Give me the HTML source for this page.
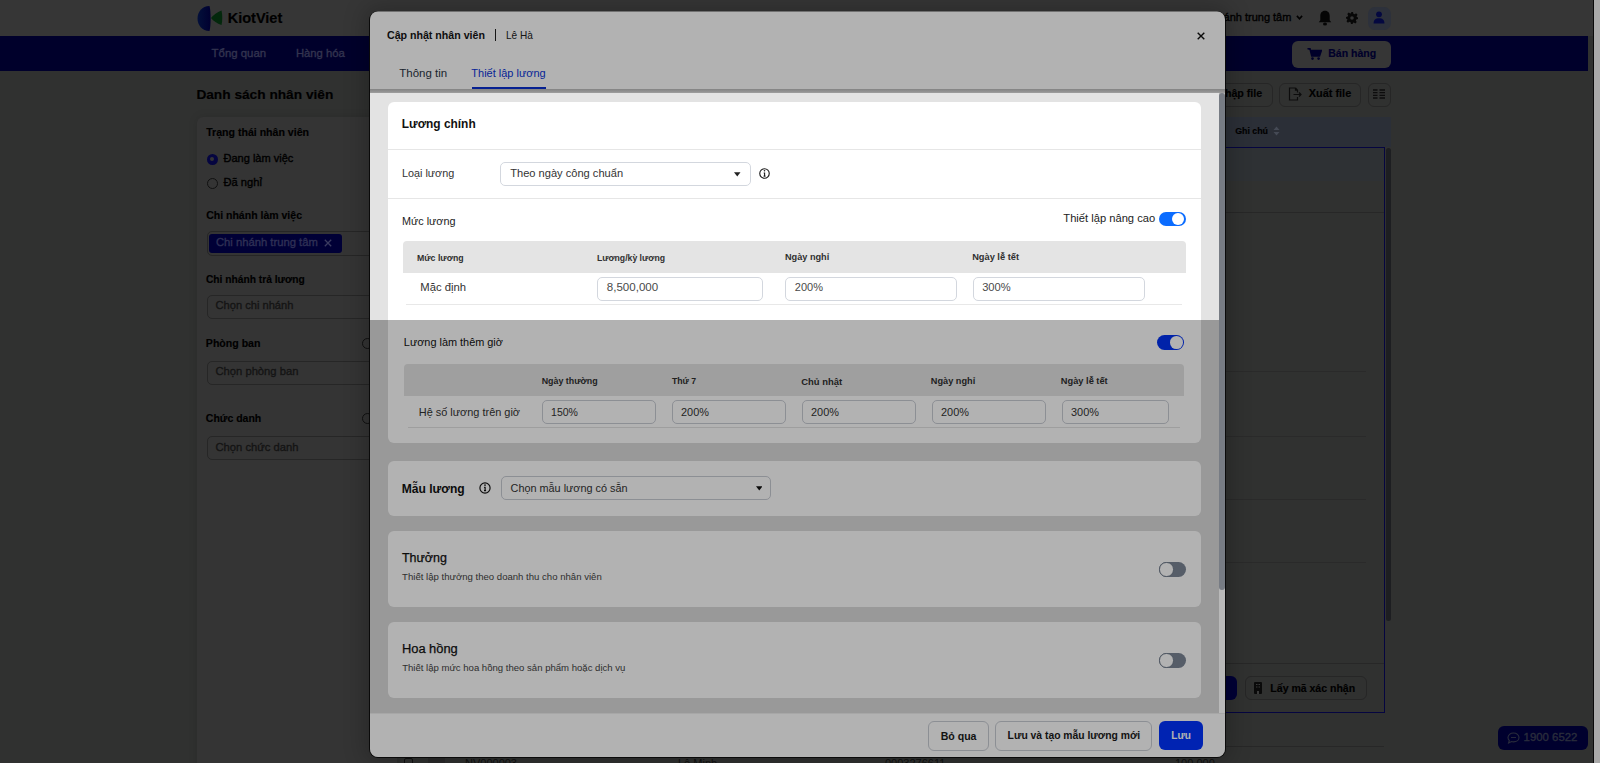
<!DOCTYPE html>
<html><head><meta charset="utf-8">
<style>
*{box-sizing:border-box;margin:0;padding:0}
html,body{width:1600px;height:763px;overflow:hidden}
body{background:#303130;font-family:"Liberation Sans",sans-serif;position:relative;color:#111}
.t{position:absolute;white-space:nowrap;line-height:1}
.b{position:absolute}
#modal{position:absolute;left:0;top:0;width:1600px;height:763px;clip-path:inset(11.5px 375px 6px 370px round 8px)}
</style></head>
<body>
<!-- ============ PAGE BACKGROUND ============ -->
<div class="b" style="left:0;top:0;width:1593px;height:36px;background:#363636"></div>
<div class="b" style="left:0;top:36px;width:1588px;height:35px;background:#00002b"></div>
<!-- logo -->
<svg class="b" style="left:196px;top:5px" width="28" height="27" viewBox="0 0 28 27">
  <defs><linearGradient id="lg1" x1="0" x2="1"><stop offset="0" stop-color="#03103a"/><stop offset="1" stop-color="#000030"/></linearGradient></defs>
  <path d="M13.5 1 C6 1 1.5 7 1.5 13.5 C1.5 20 6 26 13.5 26 C15 21 15 6 13.5 1 Z" fill="url(#lg1)"/>
  <path d="M25.5 5.5 C26.5 10 26.5 16 25.5 20 C21 18.5 17.5 16 15 13 C17.5 10 21 7 25.5 5.5 Z" fill="#03280c"/>
</svg>
<!-- top right icons -->
<svg class="b" style="left:1296px;top:15px" width="7" height="5" viewBox="0 0 7 5"><path d="M0.9 0.9 L3.5 3.7 L6.1 0.9" stroke="#000" stroke-width="1.6" fill="none"/></svg>
<svg class="b" style="left:1318px;top:10px" width="14" height="16" viewBox="0 0 14 16"><path d="M7 0.8 C3.8 0.8 2.3 3.3 2.3 6 L2.3 10.3 L0.8 12.3 L13.2 12.3 L11.7 10.3 L11.7 6 C11.7 3.3 10.2 0.8 7 0.8 Z" fill="#050505"/><ellipse cx="7" cy="14" rx="2" ry="1.6" fill="#050505"/></svg>
<svg class="b" style="left:1345.5px;top:12px" width="12" height="12" viewBox="0 0 12 12"><path d="M5 0h2l.4 1.7 1.2.5 1.5-.9 1.4 1.4-.9 1.5.5 1.2L12 5v2l-1.7.4-.5 1.2.9 1.5-1.4 1.4-1.5-.9-1.2.5L7 12H5l-.4-1.7-1.2-.5-1.5.9L.5 9.3l.9-1.5-.5-1.2L0 7V5l1.7-.4.5-1.2-.9-1.5L2.7.5l1.5.9 1.2-.5z" fill="#070707"/><circle cx="6" cy="6" r="1.8" fill="#353535"/></svg>
<div class="b" style="left:1368px;top:6.5px;width:22.5px;height:23px;background:#2d313b;border-radius:7px"></div>
<svg class="b" style="left:1373px;top:11px" width="12" height="13" viewBox="0 0 12 13"><circle cx="6" cy="3.3" r="2.9" fill="#040840"/><path d="M0.6 12.4 C0.6 8.6 2.8 7.3 6 7.3 C9.2 7.3 11.4 8.6 11.4 12.4 Z" fill="#040840"/></svg>
<!-- Ban hang button -->
<div class="b" style="left:1292px;top:41px;width:99px;height:26.5px;background:#363636;border-radius:6px"></div>
<svg class="b" style="left:1307px;top:48px" width="15" height="12" viewBox="0 0 15 12"><path d="M0.5 0.8 L3 0.8 L4.8 8 L12.5 8 L14.3 2.6 L3.8 2.6" stroke="#00002a" stroke-width="1.6" fill="#00002a"/><circle cx="5.5" cy="10.6" r="1.3" fill="#00002a"/><circle cx="11.6" cy="10.6" r="1.3" fill="#00002a"/></svg>
<!-- page scrollbar -->
<div class="b" style="left:1593px;top:0;width:1px;height:763px;background:#0a0a0a"></div>
<div class="b" style="left:1594px;top:0;width:6px;height:763px;background:#a9a9a9"></div>
<!-- left panel -->
<div class="b" style="left:197px;top:117px;width:200px;height:660px;background:#343434;border-radius:6px;box-shadow:0 0 10px rgba(0,0,0,.12)"></div>
<div class="b" style="left:206.5px;top:153.5px;width:11px;height:11px;border-radius:50%;background:#050540"></div>
<div class="b" style="left:210px;top:157px;width:4px;height:4px;border-radius:50%;background:#343434"></div>
<div class="b" style="left:206.5px;top:177.5px;width:11px;height:11px;border-radius:50%;border:1.2px solid #111"></div>
<div class="b" style="left:206.5px;top:231px;width:200px;height:25px;border:1px solid #262626;border-radius:5px"></div>
<div class="b" style="left:209px;top:234px;width:132.5px;height:18.5px;background:#000036;border-radius:3px"></div>
<svg class="b" style="left:324px;top:238.5px" width="8" height="8" viewBox="0 0 8 8"><path d="M0.8 0.8 L7.2 7.2 M7.2 0.8 L0.8 7.2" stroke="#3a3b60" stroke-width="1.3"/></svg>
<div class="b" style="left:206.5px;top:295px;width:200px;height:23.5px;border:1px solid #262626;border-radius:5px"></div>
<div class="b" style="left:206.5px;top:361px;width:200px;height:23.5px;border:1px solid #262626;border-radius:5px"></div>
<div class="b" style="left:206.5px;top:436px;width:200px;height:23.5px;border:1px solid #262626;border-radius:5px"></div>
<div class="b" style="left:362px;top:338px;width:11px;height:11px;border-radius:50%;border:1.3px solid #111"></div>
<div class="b" style="left:362px;top:413px;width:11px;height:11px;border-radius:50%;border:1.3px solid #111"></div>
<!-- right content -->
<div class="b" style="left:1200px;top:82.5px;width:72.5px;height:24px;border:1px solid #262626;border-radius:6px"></div>
<div class="b" style="left:1278.5px;top:82.5px;width:82px;height:24px;border:1px solid #262626;border-radius:6px"></div>
<svg class="b" style="left:1288px;top:87px" width="14" height="14" viewBox="0 0 14 14"><path d="M7.5 1 L1.5 1 L1.5 13 L9.5 13 L9.5 10 M7.5 1 L9.5 3.2 L9.5 5.5 M7.5 1 L7.5 3.2 L9.5 3.2 M5.5 7.5 L13 7.5 M11 5.5 L13 7.5 L11 9.5" stroke="#0c0c0c" stroke-width="1.2" fill="none"/></svg>
<div class="b" style="left:1367.5px;top:82.5px;width:23px;height:24px;border:1px solid #262626;border-radius:6px"></div>
<svg class="b" style="left:1373px;top:89px" width="12" height="10" viewBox="0 0 12 10"><path d="M0 1h4.5M6.5 1H12M0 3.7h4.5M6.5 3.7H12M0 6.3h4.5M6.5 6.3H12M0 9h4.5M6.5 9H12" stroke="#0c0c0c" stroke-width="1.3"/></svg>
<div class="b" style="left:1200px;top:116.7px;width:190.7px;height:30px;background:#2b2f37"></div>
<svg class="b" style="left:1273px;top:126px" width="7" height="10" viewBox="0 0 7 10"><path d="M3.5 0.5 L6.5 4 L0.5 4 Z M3.5 9.5 L6.5 6 L0.5 6 Z" fill="#454a55"/></svg>
<div class="b" style="left:1200px;top:147px;width:185px;height:566px;border:1px solid #050540;border-left:none"></div>
<div class="b" style="left:1200px;top:148px;width:184.4px;height:33px;background:#2e3134"></div>
<div class="b" style="left:1200px;top:212px;width:184px;height:1px;background:#272727"></div>
<div class="b" style="left:1200px;top:371px;width:166px;height:1px;background:#2a2a2a"></div>
<div class="b" style="left:1200px;top:435.5px;width:166px;height:1px;background:#2a2a2a"></div>
<div class="b" style="left:1200px;top:498.5px;width:166px;height:1px;background:#2a2a2a"></div>
<div class="b" style="left:1200px;top:561.5px;width:166px;height:1px;background:#2a2a2a"></div>
<div class="b" style="left:1200px;top:663px;width:184px;height:1px;background:#272727"></div>
<div class="b" style="left:1385.5px;top:148px;width:5.5px;height:473px;background:#1d1e21;border-radius:3px"></div>
<div class="b" style="left:1200px;top:676px;width:37px;height:24px;background:#000036;border-radius:6px"></div>
<div class="b" style="left:1244.5px;top:676px;width:122px;height:24px;border:1px solid #262626;border-radius:6px"></div>
<svg class="b" style="left:1254px;top:682px" width="8" height="12" viewBox="0 0 8 12"><rect x="0" y="0" width="8" height="12" rx="1" fill="#0a0a0a"/><path d="M2 2.5h1.5M4.5 2.5H6M2 5h1.5M4.5 5H6" stroke="#3a3a3a" stroke-width="1"/><rect x="3" y="9" width="2" height="3" fill="#3a3a3a"/></svg>
<div class="b" style="left:1200px;top:745.5px;width:184px;height:1px;background:#272727"></div>
<div class="b" style="left:1498px;top:725.5px;width:89.5px;height:24px;background:#00002e;border-radius:6px"></div>
<svg class="b" style="left:1506.5px;top:732px" width="13" height="12" viewBox="0 0 13 12"><path d="M6.5 1 C3.3 1 1 3 1 5.5 C1 6.7 1.5 7.8 2.3 8.5 L1.6 11 L4.5 9.6 C5.1 9.8 5.8 9.9 6.5 9.9 C9.7 9.9 12 7.9 12 5.5 C12 3 9.7 1 6.5 1 Z" stroke="#2a2d3c" stroke-width="1.1" fill="none"/><path d="M4 5.5 H9" stroke="#2a2d3c" stroke-width="0.9"/></svg>
<!-- bottom row under modal -->
<div class="b" style="left:404px;top:758px;width:9px;height:9px;border:1px solid #111;border-radius:2px"></div>
<div class="b" style="left:428px;top:758px;width:17px;height:9px;background:#2a2a2a"></div>
<div class="t" style="left:465px;top:758px;font-size:11px;color:#111">NV000003</div>
<div class="t" style="left:678px;top:758px;font-size:11px;color:#111">Lê Minh</div>
<div class="t" style="left:885px;top:758px;font-size:11px;color:#111">0003276611</div>
<div class="t" style="left:1175px;top:758px;font-size:11px;color:#111">100,000</div>
<!-- modal shadow line -->
<div class="b" style="left:368.8px;top:11px;width:857.4px;height:747px;border-radius:9px;background:#0a0a0a;box-shadow:0 0 22px 4px rgba(0,0,0,.22)"></div>
<div class="t" style="left:227.73px;top:10.73px;font-size:14.50px;color:#000;font-weight:bold;-webkit-text-stroke:0.15px #000">KiotViet</div>
<div class="t" style="left:1191.73px;top:12.29px;font-size:11.00px;color:#000;-webkit-text-stroke:0.35px #000">Chi nhánh trung tâm</div>
<div class="t" style="left:211.61px;top:47.93px;font-size:11.42px;color:#33344f;-webkit-text-stroke:0.35px #33344f">Tổng quan</div>
<div class="t" style="left:295.92px;top:48.06px;font-size:11.27px;color:#33344f;-webkit-text-stroke:0.35px #33344f">Hàng hóa</div>
<div class="t" style="left:1328.27px;top:48.10px;font-size:10.51px;color:#00002a;font-weight:bold;-webkit-text-stroke:0.15px #00002a">Bán hàng</div>
<div class="t" style="left:196.38px;top:87.91px;font-size:13.69px;color:#000;font-weight:bold;-webkit-text-stroke:0.15px #000">Danh sách nhân viên</div>
<div class="t" style="left:1217.20px;top:87.97px;font-size:10.67px;color:#000;font-weight:bold;-webkit-text-stroke:0.15px #000">Nhập file</div>
<div class="t" style="left:1308.85px;top:87.77px;font-size:10.90px;color:#000;font-weight:bold;-webkit-text-stroke:0.15px #000">Xuất file</div>
<div class="t" style="left:1235.17px;top:126.52px;font-size:8.84px;color:#000;font-weight:bold;-webkit-text-stroke:0.15px #000">Ghi chú</div>
<div class="t" style="left:206.17px;top:127.34px;font-size:10.58px;color:#000;font-weight:bold;-webkit-text-stroke:0.15px #000">Trạng thái nhân viên</div>
<div class="t" style="left:223.54px;top:152.76px;font-size:11.03px;color:#000;-webkit-text-stroke:0.35px #000">Đang làm việc</div>
<div class="t" style="left:223.53px;top:176.57px;font-size:11.14px;color:#000;-webkit-text-stroke:0.35px #000">Đã nghỉ</div>
<div class="t" style="left:206.17px;top:209.79px;font-size:10.52px;color:#000;font-weight:bold;-webkit-text-stroke:0.15px #000">Chi nhánh làm việc</div>
<div class="t" style="left:215.93px;top:236.88px;font-size:11.25px;color:#2f3055;-webkit-text-stroke:0.35px #2f3055">Chi nhánh trung tâm</div>
<div class="t" style="left:205.89px;top:274.73px;font-size:10.24px;color:#000;font-weight:bold;-webkit-text-stroke:0.15px #000">Chi nhánh trả lương</div>
<div class="t" style="left:215.53px;top:300.19px;font-size:11.12px;color:#141414;-webkit-text-stroke:0.35px #141414">Chọn chi nhánh</div>
<div class="t" style="left:205.87px;top:337.75px;font-size:10.57px;color:#000;font-weight:bold;-webkit-text-stroke:0.15px #000">Phòng ban</div>
<div class="t" style="left:215.53px;top:366.11px;font-size:11.21px;color:#141414;-webkit-text-stroke:0.35px #141414">Chọn phòng ban</div>
<div class="t" style="left:205.87px;top:413.52px;font-size:10.49px;color:#000;font-weight:bold;-webkit-text-stroke:0.15px #000">Chức danh</div>
<div class="t" style="left:215.53px;top:441.91px;font-size:11.21px;color:#141414;-webkit-text-stroke:0.35px #141414">Chọn chức danh</div>
<div class="t" style="left:1270.37px;top:683.08px;font-size:10.53px;color:#000;font-weight:bold;-webkit-text-stroke:0.15px #000">Lấy mã xác nhận</div>
<div class="t" style="left:1523.62px;top:731.65px;font-size:11.40px;color:#2a2d3c;-webkit-text-stroke:0.35px #2a2d3c">1900 6522</div>

<!-- ============ MODAL ============ -->
<div id="modal">
  <div class="b" style="left:370px;top:11px;width:855px;height:746px;background:#fff"></div>
  <!-- header -->
  <div class="b" style="left:495px;top:29px;width:1.3px;height:12px;background:#222"></div>
  <svg class="b" style="left:1196.5px;top:31.5px" width="8" height="8" viewBox="0 0 8 8"><path d="M0.7 0.7 L7.3 7.3 M7.3 0.7 L0.7 7.3" stroke="#111" stroke-width="1.4"/></svg>
  <div class="b" style="left:472px;top:87px;width:74px;height:2px;background:#0a2fd0"></div>
  <div class="b" style="left:370px;top:89px;width:855px;height:4px;background:linear-gradient(#bdbdbd,#cfcfcf 60%,#e6e6e6)"></div>
  <!-- body -->
  <div class="b" style="left:370px;top:93px;width:849px;height:227px;background:#e3e3e3"></div>
  <div class="b" style="left:370px;top:320px;width:849px;height:393px;background:#dcdcdc"></div>
  <!-- card 1 -->
  <div class="b" style="left:387.5px;top:102px;width:813.5px;height:341px;background:#fff;border-radius:6px"></div>
  <div class="b" style="left:387.5px;top:149px;width:813.5px;height:1px;background:#e6e6e6"></div>
  <div class="b" style="left:387.5px;top:198px;width:813.5px;height:1px;background:#e6e6e6"></div>
  <div class="b" style="left:500px;top:161.7px;width:250.7px;height:24px;border:1px solid #d3d7de;border-radius:5px"></div>
  <svg class="b" style="left:734.3px;top:171.6px" width="6.5" height="5" viewBox="0 0 6.5 5"><path d="M0 0.2 L6.5 0.2 L3.25 4.6 Z" fill="#222"/></svg>
  <svg class="b" style="left:759.2px;top:167.8px" width="11" height="11" viewBox="0 0 11 11"><circle cx="5.5" cy="5.5" r="4.75" stroke="#1a1a1a" stroke-width="1.1" fill="none"/><circle cx="5.5" cy="2.75" r=".8" fill="#1a1a1a"/><path d="M4.7 5 L5.6 5 L5.6 8 M4.6 8.1 L6.5 8.1" stroke="#1a1a1a" stroke-width="1.1" fill="none"/></svg>
  <!-- toggle on bright -->
  <div class="b" style="left:1159.2px;top:211.7px;width:26.8px;height:14.6px;background:#0b6cff;border-radius:8px"></div>
  <div class="b" style="left:1172.3px;top:213.2px;width:11.8px;height:11.8px;background:#fff;border-radius:50%"></div>
  <!-- table 1 -->
  <div class="b" style="left:402.6px;top:241px;width:783.2px;height:31.5px;background:#e4e4e4;border-radius:4px 4px 0 0"></div>
  <div class="b" style="left:597.4px;top:276.6px;width:165.6px;height:24px;border:1px solid #d3d7de;border-radius:5px"></div>
  <div class="b" style="left:785.2px;top:276.6px;width:172px;height:24px;border:1px solid #d3d7de;border-radius:5px"></div>
  <div class="b" style="left:972.5px;top:276.6px;width:172px;height:24px;border:1px solid #d3d7de;border-radius:5px"></div>
  <div class="b" style="left:406px;top:304px;width:776px;height:1px;background:#e8e8e8"></div>
  <!-- overtime -->
  <div class="b" style="left:1156.6px;top:335.3px;width:27.6px;height:14.8px;background:#0032f2;border-radius:8px"></div>
  <div class="b" style="left:1170.1px;top:336px;width:12.6px;height:12.6px;background:#fff;border-radius:50%"></div>
  <div class="b" style="left:404px;top:364.4px;width:779.7px;height:31.6px;background:#e4e4e4;border-radius:4px 4px 0 0"></div>
  <div class="b" style="left:541.8px;top:400.3px;width:114.7px;height:23.4px;border:1px solid #c9cdd5;border-radius:5px"></div>
  <div class="b" style="left:671.8px;top:400.3px;width:114.7px;height:23.4px;border:1px solid #c9cdd5;border-radius:5px"></div>
  <div class="b" style="left:801.8px;top:400.3px;width:114.7px;height:23.4px;border:1px solid #c9cdd5;border-radius:5px"></div>
  <div class="b" style="left:931.5px;top:400.3px;width:114.9px;height:23.4px;border:1px solid #c9cdd5;border-radius:5px"></div>
  <div class="b" style="left:1062px;top:400.3px;width:106.5px;height:23.4px;border:1px solid #c9cdd5;border-radius:5px"></div>
  <div class="b" style="left:408px;top:427px;width:772px;height:1px;background:#e2e2e2"></div>
  <!-- card 2 -->
  <div class="b" style="left:387.5px;top:461.2px;width:813.5px;height:54.5px;background:#fff;border-radius:6px"></div>
  <svg class="b" style="left:479.2px;top:481.8px" width="12" height="12" viewBox="0 0 12 12"><circle cx="6" cy="6" r="5.1" stroke="#111" stroke-width="1.15" fill="none"/><circle cx="6" cy="3.1" r=".85" fill="#111"/><path d="M5.1 5.4 L6.1 5.4 L6.1 8.6 M5 8.7 L7.1 8.7" stroke="#111" stroke-width="1.2" fill="none"/></svg>
  <div class="b" style="left:501.2px;top:476.2px;width:269.5px;height:24.3px;border:1px solid #c9cdd5;border-radius:5px"></div>
  <svg class="b" style="left:755.5px;top:485.5px" width="6.5" height="5" viewBox="0 0 6.5 5"><path d="M0 0.2 L6.5 0.2 L3.25 4.6 Z" fill="#111"/></svg>
  <!-- card 3 -->
  <div class="b" style="left:387.5px;top:531.4px;width:813.5px;height:75.5px;background:#fff;border-radius:6px"></div>
  <div class="b" style="left:1159px;top:562px;width:27px;height:15px;background:#7b8696;border-radius:8px"></div>
  <div class="b" style="left:1159.3px;top:562.3px;width:14.4px;height:14.4px;background:#fff;border:1px solid #6f7a8a;border-radius:50%"></div>
  <!-- card 4 -->
  <div class="b" style="left:387.5px;top:622.2px;width:813.5px;height:75.5px;background:#fff;border-radius:6px"></div>
  <div class="b" style="left:1159px;top:653px;width:27px;height:15px;background:#7b8696;border-radius:8px"></div>
  <div class="b" style="left:1159.3px;top:653.3px;width:14.4px;height:14.4px;background:#fff;border:1px solid #6f7a8a;border-radius:50%"></div>
  <!-- footer -->
  <div class="b" style="left:370px;top:713px;width:855px;height:1px;background:#f0f0f0"></div>
  <div class="b" style="left:928.1px;top:720.5px;width:60.7px;height:30px;border:1px solid #c9cdd5;border-radius:6px"></div>
  <div class="b" style="left:995.2px;top:720.5px;width:157.3px;height:30px;border:1px solid #c9cdd5;border-radius:6px"></div>
  <div class="b" style="left:1159.3px;top:720.8px;width:43.6px;height:29.7px;background:#0033ff;border-radius:6px"></div>
  <div class="t" style="left:386.96px;top:30.10px;font-size:10.64px;color:#141414;font-weight:bold">Cập nhật nhân viên</div>
<div class="t" style="left:505.90px;top:30.57px;font-size:10.08px;color:#222">Lê Hà</div>
<div class="t" style="left:399.31px;top:67.68px;font-size:11.49px;color:#2a3443">Thông tin</div>
<div class="t" style="left:471.34px;top:68.11px;font-size:10.97px;color:#0a34d8">Thiết lập lương</div>
<div class="t" style="left:401.79px;top:119.03px;font-size:11.90px;color:#111;font-weight:bold">Lương chính</div>
<div class="t" style="left:401.95px;top:167.53px;font-size:10.83px;color:#333">Loại lương</div>
<div class="t" style="left:510.23px;top:167.51px;font-size:11.10px;color:#333">Theo ngày công chuẩn</div>
<div class="t" style="left:401.95px;top:216.03px;font-size:10.83px;color:#222">Mức lương</div>
<div class="t" style="left:1063.33px;top:212.75px;font-size:11.17px;color:#222">Thiết lập nâng cao</div>
<div class="t" style="left:416.98px;top:253.59px;font-size:8.75px;color:#303030;font-weight:bold">Mức lương</div>
<div class="t" style="left:596.88px;top:253.66px;font-size:8.67px;color:#303030;font-weight:bold">Lương/kỳ lương</div>
<div class="t" style="left:784.95px;top:253.22px;font-size:9.19px;color:#303030;font-weight:bold">Ngày nghỉ</div>
<div class="t" style="left:972.14px;top:253.15px;font-size:9.27px;color:#303030;font-weight:bold">Ngày lễ tết</div>
<div class="t" style="left:420.32px;top:281.95px;font-size:11.29px;color:#333">Mặc định</div>
<div class="t" style="left:606.81px;top:281.72px;font-size:11.55px;color:#4a4a4a">8,500,000</div>
<div class="t" style="left:794.84px;top:282.20px;font-size:10.99px;color:#4a4a4a">200%</div>
<div class="t" style="left:982.13px;top:282.03px;font-size:11.18px;color:#4a4a4a">300%</div>
<div class="t" style="left:403.85px;top:336.78px;font-size:10.90px;color:#111">Lương làm thêm giờ</div>
<div class="t" style="left:541.67px;top:376.99px;font-size:8.87px;color:#303030;font-weight:bold">Ngày thường</div>
<div class="t" style="left:671.88px;top:377.10px;font-size:8.74px;color:#303030;font-weight:bold">Thứ 7</div>
<div class="t" style="left:801.23px;top:376.51px;font-size:9.44px;color:#303030;font-weight:bold">Chủ nhật</div>
<div class="t" style="left:930.85px;top:376.72px;font-size:9.19px;color:#303030;font-weight:bold">Ngày nghỉ</div>
<div class="t" style="left:1060.84px;top:376.65px;font-size:9.27px;color:#303030;font-weight:bold">Ngày lễ tết</div>
<div class="t" style="left:418.74px;top:406.83px;font-size:10.95px;color:#333">Hệ số lương trên giờ</div>
<div class="t" style="left:551.07px;top:407.20px;font-size:10.52px;color:#333">150%</div>
<div class="t" style="left:681.05px;top:406.87px;font-size:10.91px;color:#333">200%</div>
<div class="t" style="left:811.05px;top:406.87px;font-size:10.91px;color:#333">200%</div>
<div class="t" style="left:941.05px;top:406.87px;font-size:10.91px;color:#333">200%</div>
<div class="t" style="left:1071.05px;top:406.87px;font-size:10.91px;color:#333">300%</div>
<div class="t" style="left:401.78px;top:482.79px;font-size:12.07px;color:#111;font-weight:bold">Mẫu lương</div>
<div class="t" style="left:510.60px;top:482.82px;font-size:10.85px;color:#333">Chọn mẫu lương có sẵn</div>
<div class="t" style="left:401.95px;top:551.76px;font-size:12.46px;color:#111;-webkit-text-stroke:0.25px #111">Thưởng</div>
<div class="t" style="left:402.12px;top:571.68px;font-size:9.59px;color:#444">Thiết lập thưởng theo doanh thu cho nhân viên</div>
<div class="t" style="left:401.93px;top:642.69px;font-size:12.89px;color:#111;-webkit-text-stroke:0.25px #111">Hoa hồng</div>
<div class="t" style="left:402.13px;top:662.50px;font-size:9.57px;color:#444">Thiết lập mức hoa hồng theo sản phẩm hoặc dịch vụ</div>
<div class="t" style="left:940.66px;top:730.73px;font-size:10.59px;color:#1a1a1a;font-weight:bold">Bỏ qua</div>
<div class="t" style="left:1007.58px;top:730.94px;font-size:10.35px;color:#1a1a1a;font-weight:bold">Lưu và tạo mẫu lương mới</div>
<div class="t" style="left:1171.29px;top:731.13px;font-size:10.12px;color:#fff;font-weight:bold">Lưu</div>
  <!-- spotlight -->
  <div class="b" style="left:370px;top:93px;width:849px;height:227px;box-shadow:0 0 0 3000px rgba(0,0,0,.3)"></div>
  <!-- modal scrollbar (not dimmed) -->
  <div class="b" style="left:1219px;top:93px;width:6px;height:620px;background:#b9b9b9"></div>
  <div class="b" style="left:1219px;top:93px;width:6px;height:497px;background:#777c84;border-radius:3px"></div>
</div>
</body></html>
